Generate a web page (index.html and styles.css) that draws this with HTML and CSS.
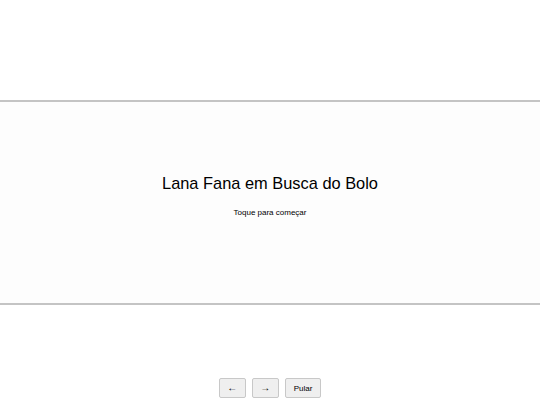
FILE: index.html
```html
<!DOCTYPE html>
<html lang="pt">
<head>
<meta charset="utf-8">
<link rel="stylesheet" href="styles.css">
</head>
<body>
<div class="app">
  <div class="top"></div>
  <main class="stage">
    <h1 class="title">Lana Fana em Busca do Bolo</h1>
    <p class="hint">Toque para começar</p>
  </main>
  <div class="bottom">
    <div class="controls">
      <button class="btn btn-arrow">←</button>
      <button class="btn btn-arrow">→</button>
      <button class="btn">Pular</button>
    </div>
  </div>
</div>
</body>
</html>
```
FILE: styles.css
```css
html, body {
  margin: 0;
  padding: 0;
  background: #ffffff;
  font-family: "Liberation Sans", Arial, sans-serif;
  color: #000;
}
.app {
  width: 540px;
  height: 405px;
  display: flex;
  flex-direction: column;
}
.top {
  height: 100px;
}
.stage {
  height: 187px;
  border-top: 2px solid #c4c4c4;
  border-bottom: 2px solid #c4c4c4;
  background: #fdfdfd;
  display: flex;
  flex-direction: column;
  align-items: center;
  justify-content: center;
  padding-bottom: 14px;
}
.title {
  margin: 0;
  font-size: 16.4px;
  font-weight: normal;
}
.hint {
  margin: 15px 0 0;
  font-size: 8px;
}
.bottom {
  flex: 1;
  display: flex;
  align-items: flex-end;
  justify-content: center;
  padding-bottom: 7px;
}
.controls {
  display: flex;
  gap: 6px;
}
.btn {
  height: 20px;
  min-width: 27px;
  padding: 0 8px;
  font-family: "Liberation Sans", Arial, sans-serif;
  font-size: 8px;
  background: #efefef;
  border: 1px solid #c8c8c8;
  border-radius: 2px;
  color: #000;
}
.btn-arrow {
  font-size: 10px;
  padding: 0 4px 2px;
}
```
